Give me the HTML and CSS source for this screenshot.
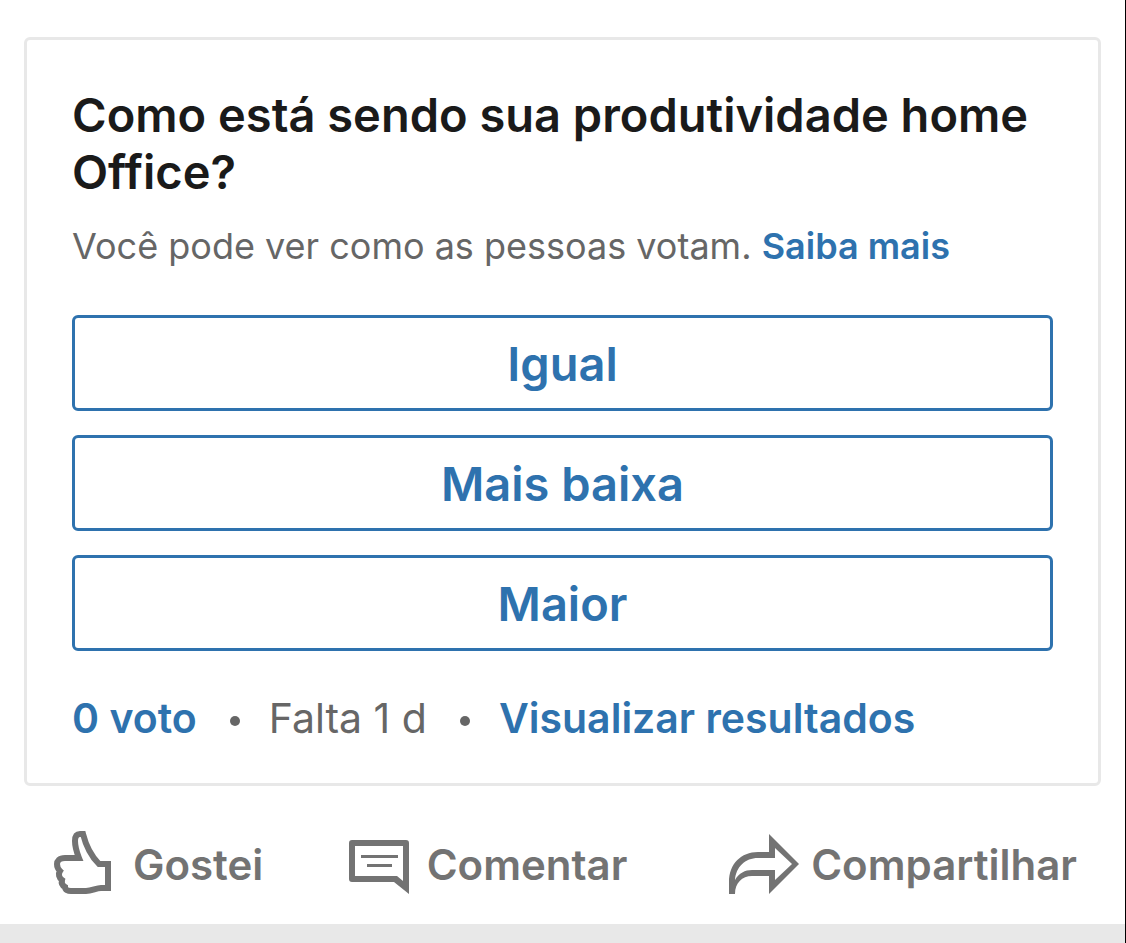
FILE: index.html
```html
<!DOCTYPE html>
<html lang="pt-BR">
<head>
    <meta charset="UTF-8">
    <meta name="viewport" content="width=device-width, initial-scale=1.0">
    <title>Enquete</title>
    <link rel="stylesheet" href="styles.css">
</head>
<body>
    <main class="post">
        <section class="poll">
            <h1>Como está sendo sua produtividade home Office?</h1>
            <p class="poll-info">Você pode ver como as pessoas votam. <a href="#">Saiba mais</a></p>

            <div class="poll-options">
                <button type="button">Igual</button>
                <button type="button">Mais baixa</button>
                <button type="button">Maior</button>
            </div>

            <div class="poll-footer">
                <a href="#">0 voto</a>
                <span class="dot"></span>
                <span>Falta 1 d</span>
                <span class="dot"></span>
                <a href="#">Visualizar resultados</a>
            </div>
        </section>

        <div class="actions">
            <button type="button" class="like">
                <svg width="58" height="66" viewBox="0 0 58 66" fill="none" stroke="currentColor" stroke-width="6" aria-hidden="true">
                    <path d="M29 3H26C22 3 21 6 21 10C21 15 23 22 25 27H11C5 27 3 30 3 33C3 36 4 38 6 40C4 43 5 47 8 49C7 53 9 55 11 56C11 59 14 60 17 60H32C38 60 42 57 47 57H54V33H45C36 24 32 15 29 3Z"/>
                </svg>
                Gostei
            </button>
            <button type="button" class="comment">
                <svg width="60" height="60" viewBox="0 -6 60 60" fill="currentColor" aria-hidden="true">
                    <path fill-rule="evenodd" d="M3 0H57Q60 0 60 3V54L45 42H3Q0 42 0 39V3Q0 0 3 0ZM6 6V36H48L54 41V6Z"/>
                    <path d="M12 15H49V18H12ZM18 24H43V27H18Z"/>
                </svg>
                Comentar
            </button>
            <button type="button" class="share">
                <svg width="70" height="60" viewBox="0 0 70 60" fill="currentColor" aria-hidden="true">
                    <path fill-rule="evenodd" d="M0 60V48C0 30 12 18 29 18H40V0L70 30L40 60V42H23C13 42 6 49 6 60ZM6 46C10 39 16 36 23 36H46V46L63 30L46 14V24H29C16 24 7 33 6 46Z"/>
                </svg>
                Compartilhar
            </button>
        </div>
    </main>
</body>
</html>
```

FILE: styles.css
```css
* {
    box-sizing: border-box;
}

body {
    margin: 0;
    min-height: 100vh;
    background-color: #e8e8e8;
    border-right: 1px solid #000;
    font-family: Inter, "Liberation Sans", sans-serif;
    font-variant-ligatures: none;
    color: #666;
}

.post {
    background-color: #fff;
    padding: 37px 24px 28px;
}

.poll {
    border: 3px solid #e8e8e8;
    border-radius: 6px;
    padding: 46px 45px 39px;
}

h1 {
    margin: 0;
    font-size: 47px;
    line-height: 57px;
    font-weight: 600;
    color: #1a1a1a;
}

a {
    color: #2e72ae;
    font-weight: 600;
    text-decoration: none;
}

.poll-info {
    margin: 24px 0 46px;
    font-size: 36px;
    line-height: 45px;
}

.poll-options {
    display: flex;
    flex-direction: column;
    gap: 24px;
}

.poll-options button {
    height: 96px;
    border: 3px solid #2e72ae;
    border-radius: 6px;
    background-color: #fff;
    color: #2e72ae;
    font-family: inherit;
    font-size: 47px;
    font-weight: 600;
    cursor: pointer;
}

.poll-footer {
    display: flex;
    align-items: center;
    margin-top: 41px;
    font-size: 41px;
    line-height: 52px;
}

.dot {
    width: 10px;
    height: 10px;
    margin: 6px 29px 0 33px;
    border-radius: 50%;
    background-color: #666;
}

.actions {
    display: grid;
    grid-template-columns: 295fr 381fr 348fr;
    padding: 46px 24px 0 30px;
}

.actions button {
    display: flex;
    align-items: center;
    height: 64px;
    padding: 0;
    border: none;
    background: none;
    color: #737373;
    font-family: inherit;
    font-size: 42px;
    font-weight: 600;
    white-space: nowrap;
    cursor: pointer;
}

.like {
    gap: 21px;
}

.comment {
    gap: 18px;
}

.share {
    gap: 12px;
}
```
